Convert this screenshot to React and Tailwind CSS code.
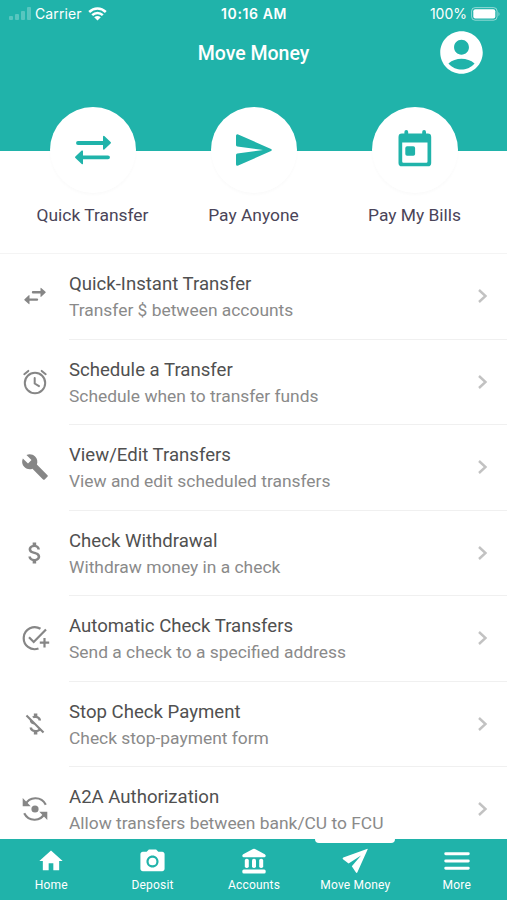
import React from "react";
import {
  MdAccountCircle,
  MdAttachMoney,
  MdBuild,
  MdCameraAlt,
  MdHome,
  MdMoneyOff,
} from "react-icons/md";

const TransferIcon = () => (
  <svg width="38" height="30" viewBox="0 0 38 30" fill="#20b3aa">
    <path d="M4 6h25V1.6a.8.8 0 0 1 1.3-.6l6.3 6a1 1 0 0 1 0 1.500l-6.3 6a.8.8 0 0 1-1.3-.6V9.900H4a1.950 1.950 0 0 1 0-3.900z" />
    <path d="M34 20.400H9v-4.200a.8.8 0 0 0-1.300-.6l-6.300 6a1 1 0 0 0 0 1.500l6.300 6a.8.8 0 0 0 1.300-.6V24.300h25a1.950 1.950 0 0 0 0-3.900z" />
  </svg>
);

const SendIcon = () => (
  <svg width="38" height="34" viewBox="0 0 38 34" fill="#20b3aa">
    <path d="M3.200 1.400 36 16q1.700 1 0 2L3.200 32.600Q1 33.200 1 31.200V21.900q0-1.300 1.300-1.500L28 17 2.300 13.600Q1 13.400 1 12.100V2.800q0-2 2.200-1.400z" />
  </svg>
);

const CalendarIcon = () => (
  <svg width="34" height="40" viewBox="0 0 34 40" fill="#20b3aa">
    <path d="M6.400 1.900a1.900 1.900 0 0 1 3.800 0v1.600h14V1.900a1.900 1.900 0 0 1 3.800 0v1.600h1.800A3.400 3.400 0 0 1 33.200 6.900v26A3.400 3.400 0 0 1 29.800 36.300H3.900A3.400 3.400 0 0 1 .5 32.900v-26A3.400 3.400 0 0 1 3.900 3.500h2.500zM4.200 12.600v19q0 1.200 1.200 1.200h22.900q1.200 0 1.200-1.200v-19z" />
    <rect x="7.300" y="16.200" width="9.800" height="9.600" rx="1.800" />
  </svg>
);

const SwapIcon = () => (
  <svg width="24" height="18" viewBox="0 0 24 18" fill="currentColor">
    <path d="M10 4.100h7.500V1.200q0-.8.700-.3l4.300 3.900q.5.500 0 1l-4.300 3.900q-.7.500-.7-.3V6.500H10a1.200 1.200 0 0 1 0-2.400z" />
    <path d="M14 11.500H6.500V8.600q0-.8-.7-.3l-4.300 3.900q-.5.500 0 1l4.300 3.900q.7.500.7-.3v-3H14a1.200 1.200 0 0 0 0-2.400z" />
  </svg>
);

const AlarmIcon = () => (
  <svg width="26" height="26" viewBox="0 0 26 26" fill="none" stroke="currentColor" strokeWidth="2" strokeLinecap="round">
    <circle cx="13" cy="14" r="10.200" />
    <path d="M12.700 9v5.500l4.300 2.600M2.300 5.200l4-3.300M23.700 5.200l-4-3.300" />
  </svg>
);

const TaskAddIcon = () => (
  <svg className="ml-[3px]" width="30" height="26" viewBox="0 0 30 26" fill="none" stroke="currentColor" strokeWidth="2.200">
    <path d="M19.500 3.800A11 11 0 1 0 17.500 23.500" />
    <path d="m8 12.300 4.700 4.700L25 4.500M23.500 13v9.400M18.800 17.700h9.400" />
  </svg>
);

const SyncIcon = () => (
  <svg width="28" height="26" viewBox="0 0 28 26" fill="none" stroke="currentColor" strokeWidth="2.200">
    <path d="M4.500 8.500C8 .8 20 -.5 24.800 8.700M23.500 17.500C20 25.200 8 26.500 3.200 17.300" />
    <path fill="currentColor" stroke="none" d="M1.700 2v8.200h8zM26.300 24v-8.200h-8z" />
    <circle cx="14" cy="13" r="3.600" fill="currentColor" stroke="none" />
  </svg>
);

const BankIcon = () => (
  <svg width="26" height="26" viewBox="0 0 26 26" fill="white">
    <path d="M12 .9q1-.5 2 0l9.800 5.300q.9.500.9 1.500v.4q0 1.100-1.200 1.100h-21Q1.300 9.200 1.300 8.100v-.4q0-1 .9-1.500z" />
    <rect x="3.800" y="10.800" width="4" height="9.200" rx="1.800" />
    <rect x="11" y="10.800" width="4" height="9.200" rx="1.800" />
    <rect x="18.200" y="10.800" width="4" height="9.200" rx="1.800" />
    <rect x="1.300" y="21.600" width="23.400" height="3.900" rx="1.500" />
  </svg>
);

const PlaneIcon = () => (
  <svg width="28" height="26" viewBox="0 0 28 26" fill="white">
    <path d="M25.900.9q1-.3.700.7L16.400 24.200q-.7 1.300-1.600.1L10.800 18.300 20 7.500 7.600 15.500 2 11.300q-1-1 .3-1.700z" />
  </svg>
);

const MenuIcon = () => (
  <svg width="26" height="20" viewBox="0 0 26 20" stroke="white" strokeWidth="2.900" strokeLinecap="round">
    <path d="M1.700 2.800h22.600M1.700 10h22.600M1.700 17.200h22.600" />
  </svg>
);

const quickActions = [
  { label: "Quick Transfer", icon: <TransferIcon /> },
  { label: "Pay Anyone", icon: <SendIcon /> },
  { label: "Pay My Bills", icon: <CalendarIcon /> },
];

const rows = [
  { title: "Quick-Instant Transfer", text: "Transfer $ between accounts", icon: <SwapIcon /> },
  { title: "Schedule a Transfer", text: "Schedule when to transfer funds", icon: <AlarmIcon /> },
  { title: "View/Edit Transfers", text: "View and edit scheduled transfers", icon: <MdBuild size={28} /> },
  { title: "Check Withdrawal", text: "Withdraw money in a check", icon: <MdAttachMoney size={28} /> },
  { title: "Automatic Check Transfers", text: "Send a check to a specified address", icon: <TaskAddIcon /> },
  { title: "Stop Check Payment", text: "Check stop-payment form", icon: <MdMoneyOff size={28} /> },
  { title: "A2A Authorization", text: "Allow transfers between bank/CU to FCU", icon: <SyncIcon /> },
];

const tabs = [
  { label: "Home", icon: <MdHome size={28} /> },
  { label: "Deposit", icon: <MdCameraAlt size={29} /> },
  { label: "Accounts", icon: <BankIcon /> },
  { label: "Move Money", icon: <PlaneIcon />, active: true },
  { label: "More", icon: <MenuIcon /> },
];

const StatusBar = () => (
  <div className="grid grid-cols-3 items-center h-[27px] pl-[9px] pr-[6px] text-[14px] font-['Inter',sans-serif]">
    <div className="flex items-center">
      <svg width="22" height="14" viewBox="0 0 22 14" fill="white" opacity="0.25">
        <rect x="0" y="9" width="4" height="4" rx="1" />
        <rect x="6" y="7" width="4" height="6" rx="1" />
        <rect x="12" y="4" width="4" height="9" rx="1" />
        <rect x="18" y="0" width="4" height="13" rx="1" />
      </svg>
      <span className="ml-[4px] tracking-[0.1px]">Carrier</span>
      <svg className="ml-[6px]" width="19" height="14" viewBox="0 0 19 14" fill="none" stroke="white" strokeWidth="2.500">
        <path d="M1.200 5C6 .4 13 .4 17.800 5M4.200 8.200c3-2.900 7.600-2.900 10.600 0" />
        <path fill="white" stroke="none" d="M6.200 10.200q3.300-2.600 6.600 0L9.500 13.600z" />
      </svg>
    </div>
    <div className="text-center font-semibold tracking-[0.600px] pr-[2px]">10:16 AM</div>
    <div className="flex items-center justify-end">
      <span>100%</span>
      <svg className="ml-[4px]" width="30" height="14" viewBox="0 0 30 14">
        <rect x=".6" y=".6" width="25.500" height="12.600" rx="3.500" fill="none" stroke="white" opacity=".5" />
        <rect x="2.300" y="2.300" width="22" height="9.200" rx="2" fill="white" />
        <path d="M27.500 4.700q2 2.300 0 4.600z" fill="white" opacity=".5" />
      </svg>
    </div>
  </div>
);

const App = () => {
  return (
    <div className="flex flex-col w-[507px] h-[900px] overflow-hidden bg-white font-['Roboto',sans-serif]">
      <header className="h-[151px] shrink-0 bg-[#20b3aa] text-white">
        <StatusBar />
        <div className="grid grid-cols-[1fr_auto_1fr] items-center h-[50px] pr-[20px] pl-[20px]">
          <span />
          <h1 className="pt-[2px] text-[19.500px] font-medium">Move Money</h1>
          <MdAccountCircle className="justify-self-end" size={51} />
        </div>
      </header>

      <section className="grid grid-cols-3 h-[103px] shrink-0 px-[12px] border-b border-[#f4f4f4]">
        {quickActions.map((e) => (
          <div key={e.label} className="flex flex-col items-center -mt-[44px]">
            <div className="flex items-center justify-center size-[86px] shrink-0 rounded-full bg-white shadow-[0_2px_3px_rgba(0,0,0,0.02)]">
              {e.icon}
            </div>
            <p className="mt-[10px] text-[17.400px] leading-6 text-[#4a4458]">{e.label}</p>
          </div>
        ))}
      </section>

      <main className="flex-1 min-h-0 overflow-hidden">
        {rows.map((e) => (
          <div key={e.title} className="flex h-[85.500px]">
            <div className="flex items-center justify-center w-[69px] shrink-0 pb-[1px] text-[#868686]">{e.icon}</div>
            <div className="flex flex-1 items-center justify-between pr-[19px] border-b border-[#f0f0f0]">
              <div className="pt-[2px]">
                <h2 className="text-[18.600px] leading-[26px] text-[#505050]">{e.title}</h2>
                <p className="text-[17.400px] leading-[26px] text-[#8a8a8a]">{e.text}</p>
              </div>
              <svg width="11" height="16" viewBox="0 0 11 16" fill="none" stroke="#c2c2c2" strokeWidth="2.400">
                <path d="m2 2 6.500 6L2 14" />
              </svg>
            </div>
          </div>
        ))}
      </main>

      <nav className="grid grid-cols-5 h-[61px] shrink-0 bg-[#20b3aa] text-white">
        {tabs.map((e) => (
          <div key={e.label} className="relative flex flex-col items-center pt-[8px] pl-[1px]">
            {e.active && <span className="absolute top-0 w-[80px] h-[4px] rounded-b-[4px] bg-white" />}
            <div className="flex items-center justify-center h-[28px]">{e.icon}</div>
            <span className="mt-[1px] text-[12px] leading-[18px] tracking-[0.2px]">{e.label}</span>
          </div>
        ))}
      </nav>
    </div>
  );
};

export default App;
